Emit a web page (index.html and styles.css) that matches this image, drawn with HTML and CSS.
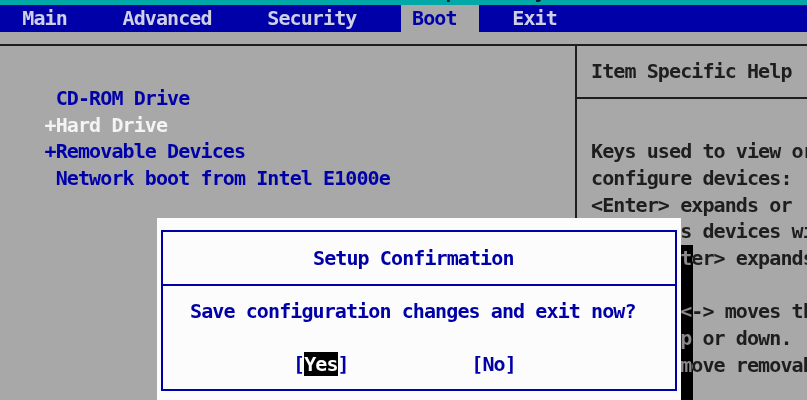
FILE: index.html
```html
<!DOCTYPE html>
<html lang="en">
<head>
  <meta charset="UTF-8">
  <title>PhoenixBIOS Setup Utility</title>
  <link rel="stylesheet" href="styles.css">
</head>
<body>
  <div class="screen">
    <!-- Judul, hanya bagian bawahnya yang kelihatan -->
    <div class="title-bar"><span class="title-text">PhoenixBIOS Setup Utility</span></div>

    <!-- Menu utama -->
    <nav class="menu">
      <span class="tab">Main</span>
      <span class="tab">Advanced</span>
      <span class="tab">Security</span>
      <span class="tab active">Boot</span>
      <span class="tab">Exit</span>
    </nav>

    <div class="frame">
      <!-- Urutan boot -->
      <div class="boot-list">
        <div class="boot-item">CD-ROM Drive</div>
        <div class="boot-item group selected">+Hard Drive</div>
        <div class="boot-item group">+Removable Devices</div>
        <div class="boot-item">Network boot from Intel E1000e</div>
      </div>

      <!-- Panel bantuan -->
      <div class="help">
        <div class="help-head">Item Specific Help</div>
        <div class="help-body">
          <div class="help-line">Keys used to view or</div>
          <div class="help-line">configure devices:</div>
          <div class="help-line">&lt;Enter&gt; expands or</div>
          <div class="help-line">collapses devices with</div>
          <div class="help-line">&lt;Ctrl+Enter&gt; expands</div>
          <div class="help-line">all</div>
          <div class="help-line">&lt;+&gt; and &lt;-&gt; moves the</div>
          <div class="help-line">device up or down.</div>
          <div class="help-line">&lt;n&gt; May move removable</div>
        </div>
      </div>
    </div>

    <!-- Dialog konfirmasi -->
    <div class="dialog">
      <div class="dialog-box">
        <div class="dialog-title">Setup Confirmation</div>
        <div class="dialog-msg">Save configuration changes and exit now?</div>
        <div class="dialog-blank"></div>
        <div class="dialog-buttons">[<span class="btn-focus">Yes</span>]           [No]</div>
      </div>
    </div>
    <div class="dialog-shadow"></div>
  </div>
</body>
</html>
```

FILE: styles.css
```css
/* Reset dasar */
* {
  margin: 0;
  padding: 0;
  box-sizing: border-box;
}
:root {
  --cw: 11.14px;     /* lebar satu sel karakter */
  --row: 26.67px;    /* tinggi satu baris */
  --grey: #a8a8a8;
  --blue: #0000a8;
  --ink: #1e1e1e;
}
body {
  width: 807px;
  height: 400px;
  overflow: hidden;
  background: var(--grey);
  font-family: "DejaVu Sans Mono", "Liberation Mono", monospace;
  font-size: 20px;
  font-weight: bold;
  letter-spacing: -0.9px;
  line-height: var(--row);
  white-space: nowrap;
}
.screen {
  position: relative;
  width: 807px;
  height: 400px;
  overflow: hidden;
}

/* Strip judul */
.title-bar {
  height: 5px;
  overflow: hidden;
  background: #00a8a8;
}
.title-text {
  display: block;
  margin-top: -21.67px;
  padding-left: calc(var(--cw) * 24);
  color: #10202a;
}

/* Menu */
.menu {
  display: flex;
  height: var(--row);
  background: var(--blue);
  color: #cfcfe6;
  padding-left: var(--cw);
}
.tab {
  padding: 0 var(--cw);
}
.tab + .tab {
  margin-left: calc(var(--cw) * 3);
}
.tab.active {
  background: var(--grey);
  color: var(--blue);
  padding-right: calc(var(--cw) * 2);
}
.tab.active + .tab {
  margin-left: calc(var(--cw) * 2);
}

/* Bingkai utama */
.frame {
  display: flex;
  margin-top: 12px;
  border-top: 2px solid var(--ink);
  height: 400px;
}
.boot-list {
  width: 575px;
  flex-shrink: 0;
  padding-top: 39.4px;
  padding-left: calc(var(--cw) * 4);
  color: var(--blue);
}
.boot-item {
  padding-left: var(--cw);
}
.boot-item.group {
  padding-left: 0;
}
.boot-item.selected {
  color: #f4f4f4;
}

.help {
  flex: 1;
  border-left: 2px solid var(--ink);
  color: var(--ink);
  overflow: hidden;
}
.help-head {
  padding: 12.7px 0 12.3px 14px;
  border-bottom: 2px solid var(--ink);
}
.help-body {
  padding-top: 39px;
  padding-left: 14px;
}

/* Dialog */
.dialog {
  position: absolute;
  left: 157px;
  top: 218px;
  width: 524px;
  height: 190px;
  background: #fcfcfc;
  padding: 12px 4px 0 4px;
  color: var(--blue);
}
.dialog-box {
  border: 2px solid var(--blue);
}
.dialog-title {
  padding: 12.67px 0 12.3px 150px;
  border-bottom: 2px solid var(--blue);
}
.dialog-msg {
  padding: 12.4px 0 0 27px;
}
.dialog-blank {
  height: var(--row);
}
.dialog-buttons {
  padding: 0 0 11px 130px;
  white-space: pre;
}
.btn-focus {
  background: #000;
  color: #fff;
}

/* Bayangan dialog */
.dialog-shadow {
  position: absolute;
  left: 681px;
  top: 245px;
  width: 12px;
  height: 160px;
  background: var(--grey);
  mix-blend-mode: difference;
}
```
